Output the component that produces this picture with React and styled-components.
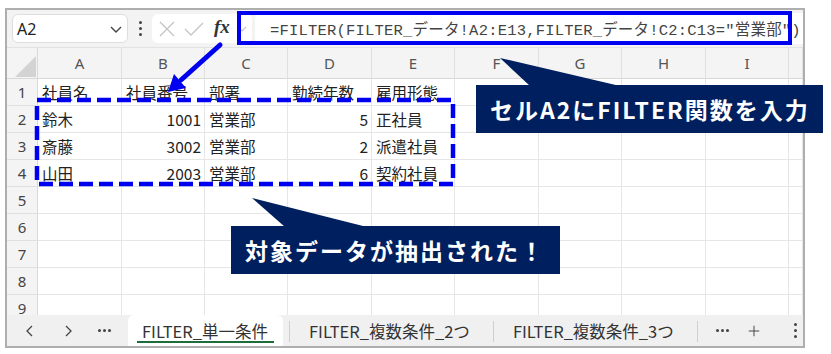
import React from 'react'
import styled, { createGlobalStyle } from 'styled-components'

const GlobalStyle = createGlobalStyle`
  html, body { margin: 0; padding: 0; background: #fff; }
  body { font-family: "Noto Sans CJK JP", "Noto Sans", sans-serif; }
  * { box-sizing: border-box; }
`

const NAVY = '#001f5f'
const BLUE = '#0000f0'

const cols = ['A', 'B', 'C', 'D', 'E', 'F', 'G', 'H', 'I']
const colWidths = [84, 83, 83, 84, 83, 84, 83, 84, 83]

const data = [
  ['社員名', '社員番号', '部署', '勤続年数', '雇用形態'],
  ['鈴木', 1001, '営業部', 5, '正社員'],
  ['斎藤', 3002, '営業部', 2, '派遣社員'],
  ['山田', 2003, '営業部', 6, '契約社員'],
]

export default function App() {
  return (
    <>
      <GlobalStyle />
      <Page>
        <Frame>
          <Toolbar>
            <NameBox>
              <span>A2</span>
              <svg width="14" height="10" viewBox="0 0 14 10">
                <polyline points="2,3 7,8 12,3" fill="none" stroke="#444" strokeWidth="1.4" />
              </svg>
            </NameBox>
            <Kebab>
              <i /><i /><i />
            </Kebab>
            <FxGroup>
              <svg width="18" height="18" viewBox="0 0 18 18">
                <path d="M2 2 L16 16 M16 2 L2 16" stroke="#c4c4c4" strokeWidth="1.3" fill="none" />
              </svg>
              <svg width="20" height="18" viewBox="0 0 20 18">
                <polyline points="1,9 7,15 19,3" stroke="#c4c4c4" strokeWidth="1.3" fill="none" />
              </svg>
              <Fx>fx</Fx>
              <svg width="12" height="10" viewBox="0 0 12 10">
                <polyline points="2,3 6,7 10,3" fill="none" stroke="#c8c8c8" strokeWidth="1.2" />
              </svg>
            </FxGroup>
            <FormulaBox>=FILTER(FILTER_データ!A2:E13,FILTER_データ!C2:C13="営業部")</FormulaBox>
          </Toolbar>

          <Sheet>
            <Corner>
              <svg width="31" height="31" viewBox="0 0 31 31">
                <polygon points="8,29 29,29 29,8" fill="#d3d3d3" />
              </svg>
            </Corner>
            {cols.map((c) => (
              <ColHeader key={c}>{c}</ColHeader>
            ))}
            <ColHeader />
            {Array.from({ length: 9 }, (_, r) => (
              <React.Fragment key={r}>
                <RowHeader>{r + 1}</RowHeader>
                {cols.map((c, ci) => {
                  const v = data[r] ? data[r][ci] : undefined
                  return (
                    <Cell key={c} $num={typeof v === 'number'}>
                      {v}
                    </Cell>
                  )
                })}
                <Cell />
              </React.Fragment>
            ))}
          </Sheet>

          <TabBar>
            <NavBtn>
              <svg width="10" height="14" viewBox="0 0 10 14">
                <polyline points="7,2 2,7 7,12" fill="none" stroke="#444" strokeWidth="1.3" />
              </svg>
            </NavBtn>
            <NavBtn>
              <svg width="10" height="14" viewBox="0 0 10 14">
                <polyline points="3,2 8,7 3,12" fill="none" stroke="#444" strokeWidth="1.3" />
              </svg>
            </NavBtn>
            <NavBtn $w={34}>
              <Dots />
            </NavBtn>
            <ActiveTab>FILTER_単一条件</ActiveTab>
            <Sep />
            <Tab>FILTER_複数条件_2つ</Tab>
            <Sep />
            <Tab>FILTER_複数条件_3つ</Tab>
            <Sep />
            <NavBtn $w={50}>
              <Dots />
            </NavBtn>
            <NavBtn $w={12}>
              <svg width="16" height="16" viewBox="0 0 16 16">
                <path d="M8 1 V15 M1 8 H15" stroke="#444" strokeWidth="1.3" />
              </svg>
            </NavBtn>
            <Spacer />
            <Kebab $small>
              <i /><i /><i />
            </Kebab>
          </TabBar>
        </Frame>

        <Marks width="831" height="354" viewBox="0 0 831 354">
          <rect x="239" y="13" width="551" height="30" fill="none" stroke={BLUE} strokeWidth="4" />
          <rect x="37" y="100" width="416" height="84" fill="none" stroke={BLUE} strokeWidth="4.5" strokeDasharray="14 6" />
          <line x1="220" y1="45" x2="181" y2="80" stroke={BLUE} strokeWidth="5" strokeLinecap="round" />
          <polygon points="168,92 186,88 174,74" fill={BLUE} />
          <polygon points="500,58 530,86 620,86" fill={NAVY} />
          <polygon points="252,198 285,227 367,227" fill={NAVY} />
        </Marks>
        <Callout $x={476} $y={85} $w={347}>セルA2にFILTER関数を入力</Callout>
        <Callout $x={231} $y={226} $w={329}>対象データが抽出された！</Callout>
      </Page>
    </>
  )
}

const Page = styled.div`
  position: relative;
  width: 831px;
  height: 354px;
  overflow: hidden;
  padding: 8px 0 0 5px;
`

const Frame = styled.div`
  width: 800px;
  height: 340px;
  border: 2px solid #aeaeae;
  background: #fff;
  display: flex;
  flex-direction: column;
`

const Toolbar = styled.div`
  height: 38px;
  flex: none;
  background: #f3f3f3;
  display: flex;
  align-items: center;
  padding: 0 0 0 5px;
  border-bottom: 1px solid #e2e2e2;
`

const NameBox = styled.div`
  width: 116px;
  height: 29px;
  background: #fff;
  border: 1px solid #dedede;
  border-radius: 6px;
  display: flex;
  align-items: center;
  justify-content: space-between;
  padding: 0 4px 0 4px;
  font-family: "Noto Sans", sans-serif;
  font-size: 16px;
  color: #222;
`

const Kebab = styled.div`
  width: ${(p) => (p.$small ? 16 : 24)}px;
  display: flex;
  flex-direction: column;
  align-items: center;
  justify-content: center;
  gap: 3px;
  i {
    display: block;
    width: 3px;
    height: 3px;
    border-radius: 50%;
    background: #444;
  }
`

const FxGroup = styled.div`
  width: 100px;
  height: 29px;
  background: #fff;
  border-radius: 6px;
  display: flex;
  align-items: center;
  padding-left: 6px;
  gap: 8px;
  svg:last-child { margin-left: -2px; }
`

const Fx = styled.span`
  font-family: "Liberation Serif", serif;
  font-style: italic;
  font-weight: bold;
  font-size: 19px;
  color: #333;
  margin-left: 2px;
  margin-top: -4px;
`

const FormulaBox = styled.div`
  flex: 1;
  height: 31px;
  margin-left: 3px;
  background: #fff;
  border-radius: 6px 0 0 6px;
  display: flex;
  align-items: center;
  padding-left: 15px;
  font-family: "Liberation Mono", "Noto Sans CJK JP", monospace;
  font-size: 15.5px;
  letter-spacing: 0.2px;
  color: #444;
  white-space: nowrap;
  overflow: hidden;
`

const Sheet = styled.div`
  flex: 1;
  min-height: 0;
  overflow: hidden;
  display: grid;
  grid-template-columns: 31px ${colWidths.map((w) => `${w}px`).join(' ')} 1fr;
  grid-template-rows: 31px repeat(9, 27px);
`

const Corner = styled.div`
  background: #f4f4f4;
  border-right: 1px solid #d8d8d8;
  border-bottom: 1px solid #d8d8d8;
  svg { display: block; }
`

const ColHeader = styled.div`
  background: #f4f4f4;
  border-right: 1px solid #e0e0e0;
  border-bottom: 1px solid #d8d8d8;
  display: flex;
  align-items: center;
  justify-content: center;
  font-family: "Noto Sans", sans-serif;
  font-size: 15px;
  color: #555;
`

const RowHeader = styled.div`
  background: #f4f4f4;
  border-right: 1px solid #d8d8d8;
  border-bottom: 1px solid #e0e0e0;
  display: flex;
  align-items: center;
  justify-content: center;
  font-family: "Noto Sans", sans-serif;
  font-size: 15px;
  color: #444;
`

const Cell = styled.div`
  border-right: 1px solid #e6e6e6;
  border-bottom: 1px solid #e6e6e6;
  display: flex;
  align-items: center;
  justify-content: ${(p) => (p.$num ? 'flex-end' : 'flex-start')};
  padding: 0 3px 0 4px;
  font-family: "Noto Sans CJK JP", sans-serif;
  font-size: 15.5px;
  color: #222;
  white-space: nowrap;
`

const TabBar = styled.div`
  height: 31px;
  flex: none;
  background: #f0f0f0;
  display: flex;
  align-items: stretch;
  padding-left: 4px;
  font-family: "Noto Sans CJK JP", sans-serif;
  font-size: 16.5px;
  color: #333;
`

const NavBtn = styled.div`
  width: ${(p) => p.$w || 38}px;
  display: flex;
  align-items: center;
  justify-content: center;
`

const Dots = styled.span`
  display: block;
  width: 3px;
  height: 3px;
  border-radius: 50%;
  background: #444;
  box-shadow: -5px 0 0 #444, 5px 0 0 #444;
`

const ActiveTab = styled.div`
  margin-left: 7px;
  width: 155px;
  background: #fff;
  border-radius: 6px 6px 0 0;
  position: relative;
  display: flex;
  align-items: center;
  padding-left: 14px;
  white-space: nowrap;
  &::after {
    content: '';
    position: absolute;
    left: 9px;
    right: 9px;
    bottom: 3px;
    height: 2px;
    background: #1e6e3c;
  }
`

const Tab = styled.div`
  display: flex;
  align-items: center;
  padding: 0 17px 0 19px;
  white-space: nowrap;
`

const Sep = styled.div`
  width: 1px;
  margin: 6px 0 4px 6px;
  background: #cfcfcf;
`

const Spacer = styled.div`
  flex: 1;
`

const Marks = styled.svg`
  position: absolute;
  left: 0;
  top: 0;
  pointer-events: none;
`

const Callout = styled.div`
  position: absolute;
  left: ${(p) => p.$x}px;
  top: ${(p) => p.$y}px;
  width: ${(p) => p.$w}px;
  height: 48px;
  background: ${NAVY};
  color: #fff;
  display: flex;
  align-items: center;
  padding-left: 14px;
  font-family: "Noto Sans CJK JP", sans-serif;
  font-weight: bold;
  font-size: 23px;
  letter-spacing: 2px;
  white-space: nowrap;
`
